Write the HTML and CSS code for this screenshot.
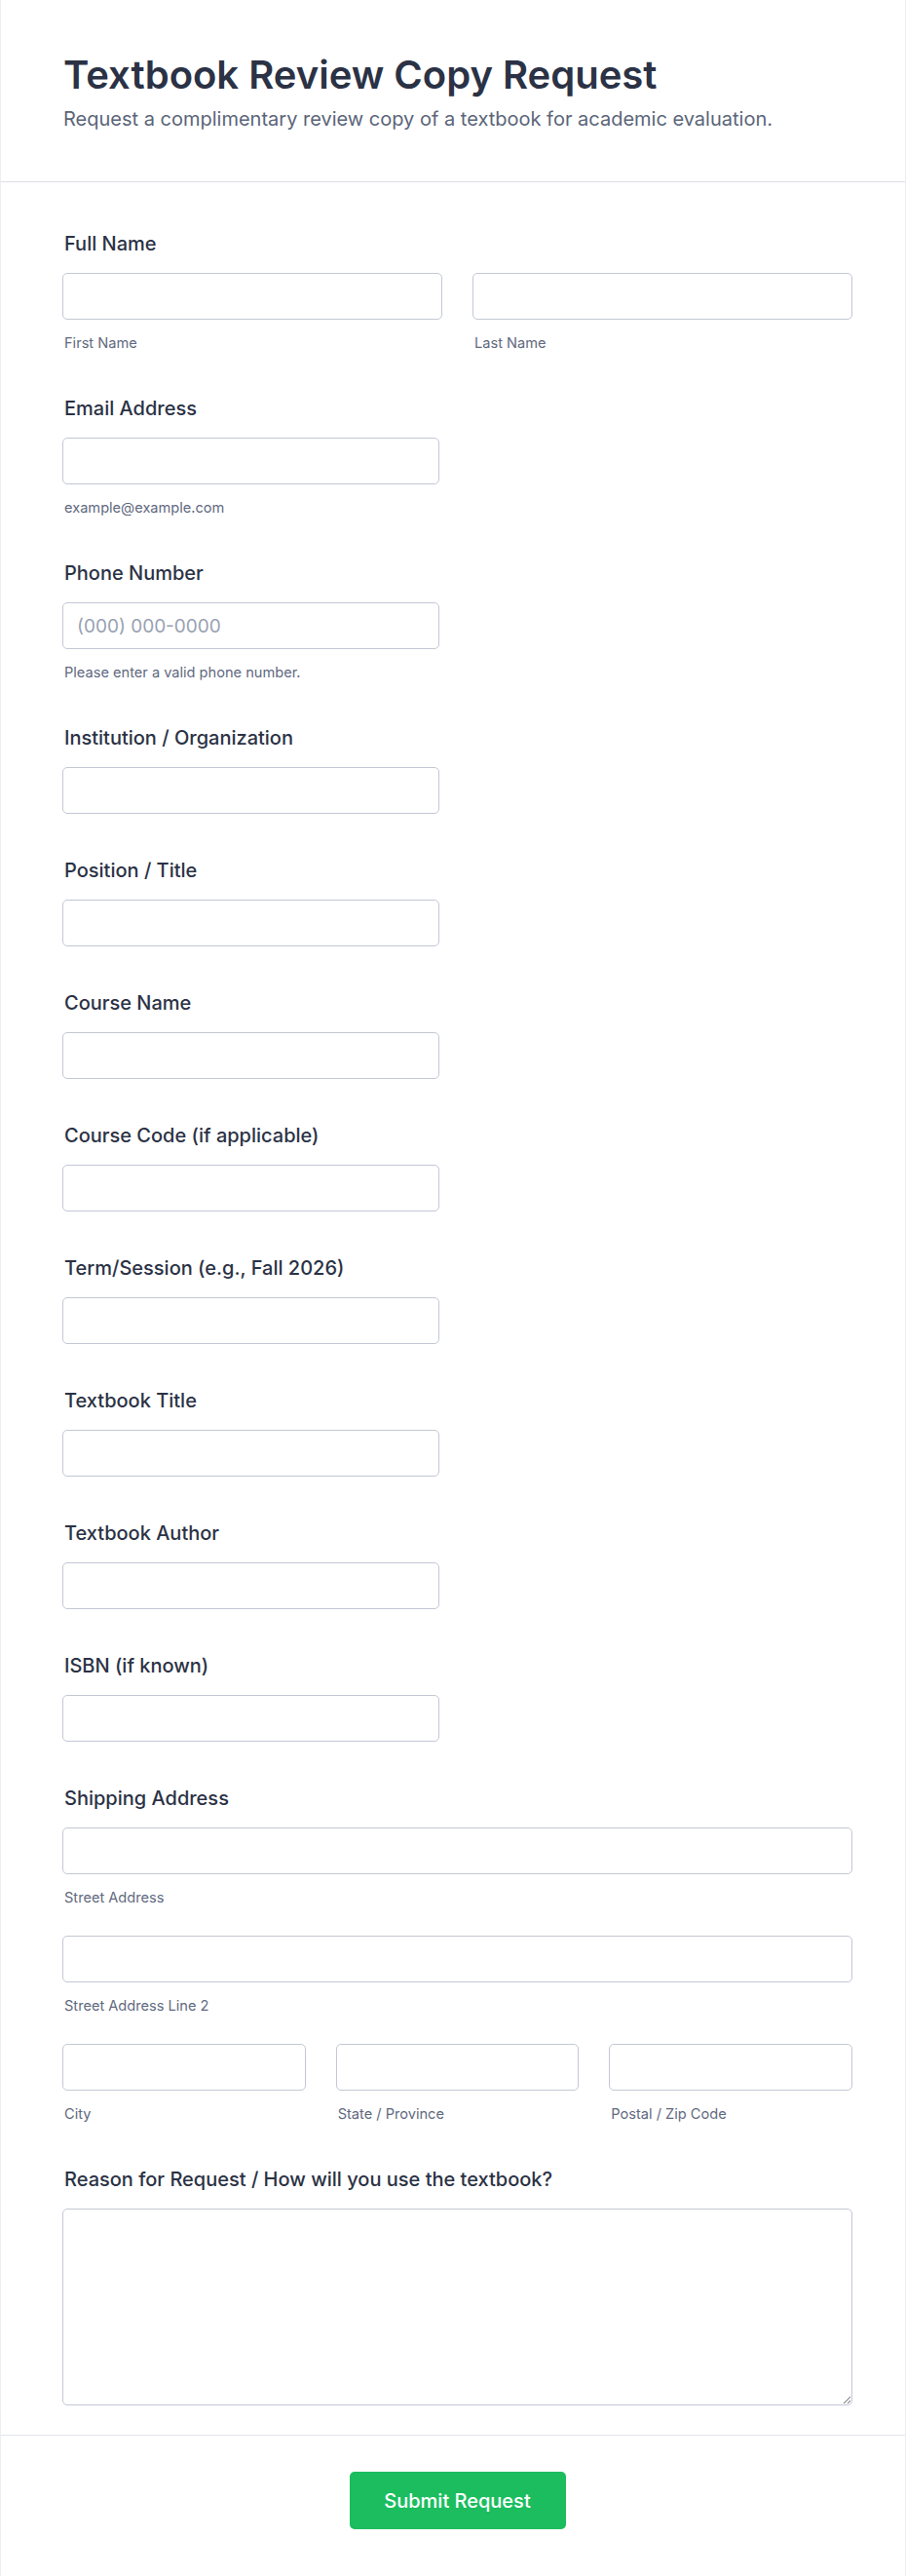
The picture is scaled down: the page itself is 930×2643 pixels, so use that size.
FILE: index.html
```html
<!DOCTYPE html>
<html lang="en">
<head>
<meta charset="utf-8">
<title>Textbook Review Copy Request</title>
<link rel="stylesheet" href="styles.css">
</head>
<body>
<div class="card">
  <header class="header">
    <h1 class="title">Textbook Review Copy Request</h1>
    <p class="subtitle">Request a complimentary review copy of a textbook for academic evaluation.</p>
  </header>
  <form class="form">
    <div class="field">
      <label class="label">Full Name</label>
      <div class="row two">
        <div class="cell"><input class="input" type="text"><span class="sub">First Name</span></div>
        <div class="cell"><input class="input" type="text"><span class="sub">Last Name</span></div>
      </div>
    </div>
    <div class="field">
      <label class="label">Email Address</label>
      <input class="input half" type="email">
      <span class="sub">example@example.com</span>
    </div>
    <div class="field">
      <label class="label">Phone Number</label>
      <input class="input half" type="tel" placeholder="(000) 000-0000">
      <span class="sub">Please enter a valid phone number.</span>
    </div>
    <div class="field">
      <label class="label">Institution / Organization</label>
      <input class="input half" type="text">
    </div>
    <div class="field">
      <label class="label">Position / Title</label>
      <input class="input half" type="text">
    </div>
    <div class="field">
      <label class="label">Course Name</label>
      <input class="input half" type="text">
    </div>
    <div class="field">
      <label class="label">Course Code (if applicable)</label>
      <input class="input half" type="text">
    </div>
    <div class="field">
      <label class="label">Term/Session (e.g., Fall 2026)</label>
      <input class="input half" type="text">
    </div>
    <div class="field">
      <label class="label">Textbook Title</label>
      <input class="input half" type="text">
    </div>
    <div class="field">
      <label class="label">Textbook Author</label>
      <input class="input half" type="text">
    </div>
    <div class="field">
      <label class="label">ISBN (if known)</label>
      <input class="input half" type="text">
    </div>
    <div class="field">
      <label class="label">Shipping Address</label>
      <div class="address">
        <div class="cell"><input class="input" type="text"><span class="sub">Street Address</span></div>
        <div class="cell"><input class="input" type="text"><span class="sub">Street Address Line 2</span></div>
        <div class="row three">
          <div class="cell"><input class="input" type="text"><span class="sub">City</span></div>
          <div class="cell"><input class="input" type="text"><span class="sub">State / Province</span></div>
          <div class="cell"><input class="input" type="text"><span class="sub">Postal / Zip Code</span></div>
        </div>
      </div>
    </div>
    <div class="field last">
      <label class="label">Reason for Request / How will you use the textbook?</label>
      <textarea class="input textarea"></textarea>
    </div>
  </form>
  <footer class="footer">
    <button class="submit" type="button">Submit Request</button>
  </footer>
</div>
</body>
</html>
```

FILE: styles.css
```css
* { box-sizing: border-box; }
html, body {
  margin: 0;
  padding: 0;
  background: #ffffff;
}
body {
  font-family: Inter, "Noto Sans", "Liberation Sans", sans-serif;
  color: #2b3245;
}
.card {
  width: 930px;
  min-height: 2643px;
  border: 1px solid #eceef3;
  border-top: none;
  display: flex;
  flex-direction: column;
}
.header {
  padding: 53px 54px 50px 64px;
  border-bottom: 1px solid #dcdee8;
}
.title {
  margin: 0;
  font-size: 40px;
  line-height: 48px;
  font-weight: 600;
  color: #2b3245;
  letter-spacing: 0;
}
.subtitle {
  margin: 8px 0 0;
  font-size: 20px;
  line-height: 27px;
  color: #5b6579;
}
.form {
  padding: 49px 54px 30px 63px;
  display: flex;
  flex-direction: column;
  gap: 44px;
}
.field {
  display: flex;
  flex-direction: column;
  align-items: flex-start;
}
.label {
  display: block;
  padding-left: 2px;
  font-size: 20px;
  line-height: 28px;
  font-weight: 500;
  color: #2b3245;
  margin-bottom: 16px;
}
.input {
  display: block;
  width: 100%;
  height: 48px;
  border: 1px solid #c3c8d4;
  border-radius: 5px;
  background: #fff;
  padding: 0 14px;
  font-family: inherit;
  font-size: 19px;
  color: #2b3245;
  margin: 0;
}
.input::placeholder { color: #98a1b2; }
.input.half { width: 387px; }
.sub {
  display: block;
  margin-top: 15px;
  padding-left: 2px;
  font-size: 14.6px;
  line-height: 18px;
  color: #5f6980;
}
.row {
  display: grid;
  column-gap: 31px;
  width: 100%;
}
.row.two { grid-template-columns: 1fr 1fr; }
.row.three { grid-template-columns: 1fr 1fr 1fr; }
.address {
  display: flex;
  flex-direction: column;
  gap: 30px;
  width: 100%;
}
.cell { min-width: 0; }
.textarea {
  height: 202px;
  resize: vertical;
  padding: 12px 14px;
}
.footer {
  flex: 1;
  border-top: 1px solid #e3e5ee;
  padding: 37px 54px 50px 63px;
  display: flex;
  justify-content: center;
  align-items: flex-start;
  background: #ffffff;
}
.submit {
  width: 222px;
  height: 59px;
  border: none;
  border-radius: 5px;
  background: #1bbd5e;
  color: #ffffff;
  font-family: inherit;
  font-size: 20px;
  font-weight: 500;
  cursor: pointer;
}
```
